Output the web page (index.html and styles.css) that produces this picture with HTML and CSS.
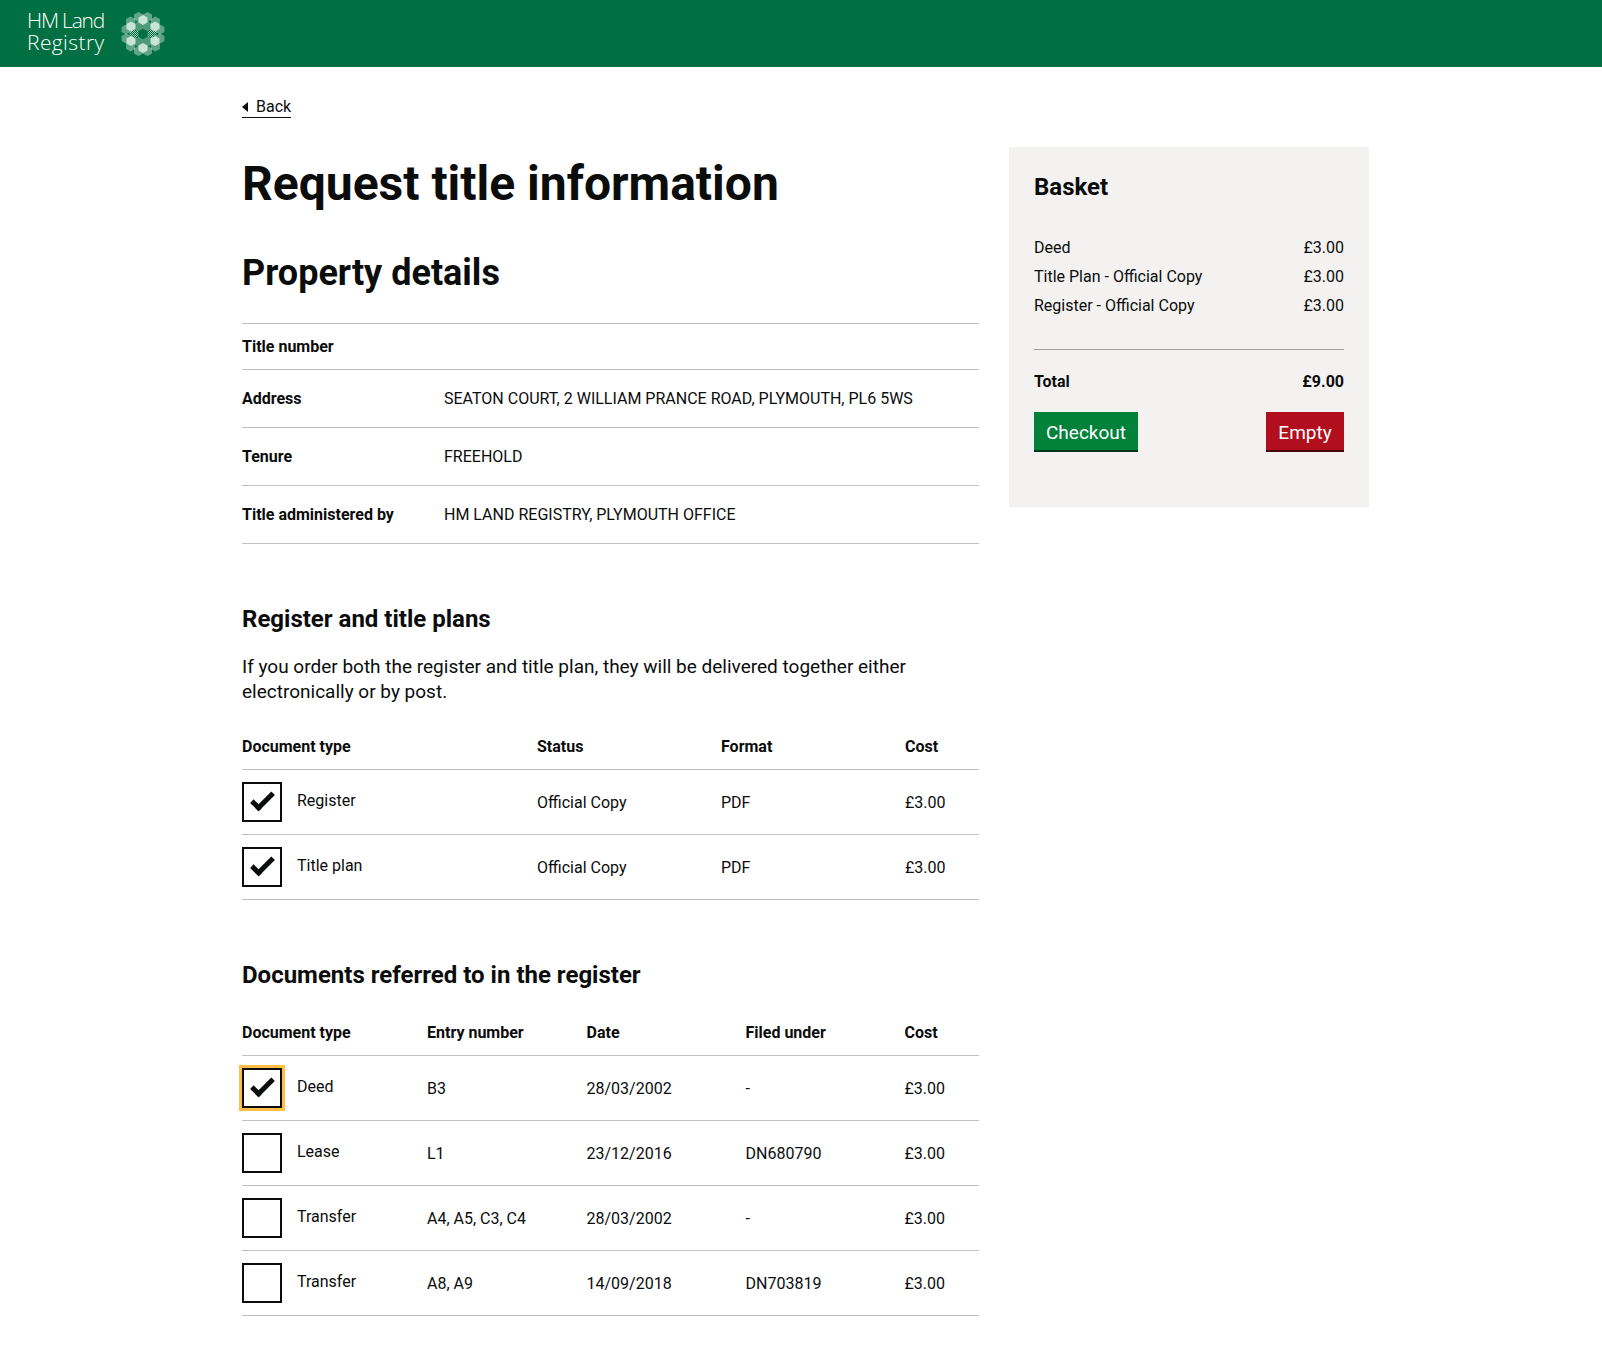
FILE: index.html
```html
<!DOCTYPE html>
<html lang="en">
<head>
    <meta charset="UTF-8">
    <title>Request title information - HM Land Registry</title>
    <link rel="stylesheet" href="styles.css">
</head>
<body>
    <header class="site-header">
        <a class="logo" href="#">
            <span class="logo-text">
                <span class="logo-line-one">HM Land</span>
                <span class="logo-line-two">Registry</span>
            </span>
            <svg class="logo-mark" width="44" height="44" viewBox="0 0 44 44">
                <defs>
                    <polygon id="hex" points="0,-5 4.500,-2.500 4.500,2.500 0,5 -4.500,2.500 -4.500,-2.500"/>
                    <pattern id="dither" width="2" height="2" patternUnits="userSpaceOnUse">
                        <rect width="1" height="1" fill="#fff" fill-opacity="0.75"/>
                        <rect x="1" y="1" width="1" height="1" fill="#fff" fill-opacity="0.75"/>
                    </pattern>
                    <pattern id="dither-dim" width="2" height="2" patternUnits="userSpaceOnUse">
                        <rect width="1" height="1" fill="#fff" fill-opacity="0.6"/>
                        <rect x="1" y="1" width="1" height="1" fill="#fff" fill-opacity="0.6"/>
                    </pattern>
                </defs>
                <g fill="url(#dither)">
                    <use href="#hex" x="38.900" y="26.500"/>
                    <use href="#hex" x="34.400" y="34.400"/>
                    <use href="#hex" x="26.500" y="38.900"/>
                    <use href="#hex" x="17.500" y="38.900"/>
                    <use href="#hex" x="9.600" y="34.400"/>
                    <use href="#hex" x="5.100" y="26.500"/>
                    <use href="#hex" x="5.100" y="17.500"/>
                    <use href="#hex" x="9.600" y="9.600"/>
                    <use href="#hex" x="17.500" y="5.100"/>
                    <use href="#hex" x="26.500" y="5.100"/>
                    <use href="#hex" x="34.400" y="9.600"/>
                    <use href="#hex" x="38.900" y="17.500"/>
                </g>
                <g fill="url(#dither-dim)">
                    <use href="#hex" x="31" y="22"/>
                    <use href="#hex" x="26.500" y="29.800"/>
                    <use href="#hex" x="17.500" y="29.800"/>
                    <use href="#hex" x="13" y="22"/>
                    <use href="#hex" x="17.500" y="14.200"/>
                    <use href="#hex" x="26.500" y="14.200"/>
                </g>
                <g fill="#c9e3d6">
                    <use href="#hex" x="22" y="8"/>
                    <use href="#hex" x="22" y="36"/>
                    <use href="#hex" x="10" y="14.500"/>
                    <use href="#hex" x="34" y="14.500"/>
                    <use href="#hex" x="10" y="29"/>
                    <use href="#hex" x="34" y="29"/>
                </g>
                <circle cx="22" cy="22" r="3.500" fill="#006f41"/>
            </svg>
        </a>
    </header>

    <div class="page">
        <main class="main-col">
            <a class="back-link" href="#">Back</a>

            <div class="columns">
                <div class="content">
                    <h1>Request title information</h1>
                    <h2>Property details</h2>

                    <dl class="summary">
                        <div class="summary-row title-row">
                            <dt>Title number</dt>
                            <dd></dd>
                        </div>
                        <div class="summary-row">
                            <dt>Address</dt>
                            <dd>SEATON COURT, 2 WILLIAM PRANCE ROAD, PLYMOUTH, PL6 5WS</dd>
                        </div>
                        <div class="summary-row">
                            <dt>Tenure</dt>
                            <dd>FREEHOLD</dd>
                        </div>
                        <div class="summary-row">
                            <dt>Title administered by</dt>
                            <dd>HM LAND REGISTRY, PLYMOUTH OFFICE</dd>
                        </div>
                    </dl>

                    <h3 class="first-section">Register and title plans</h3>
                    <p class="intro">If you order both the register and title plan, they will be delivered together either electronically or by post.</p>

                    <table class="doc-table plans">
                        <thead>
                            <tr>
                                <th class="col-type">Document type</th>
                                <th class="col-status">Status</th>
                                <th class="col-format">Format</th>
                                <th>Cost</th>
                            </tr>
                        </thead>
                        <tbody>
                            <tr>
                                <td><label class="check"><span class="box checked"></span><span class="check-text">Register</span></label></td>
                                <td>Official Copy</td>
                                <td>PDF</td>
                                <td>£3.00</td>
                            </tr>
                            <tr>
                                <td><label class="check"><span class="box checked"></span><span class="check-text">Title plan</span></label></td>
                                <td>Official Copy</td>
                                <td>PDF</td>
                                <td>£3.00</td>
                            </tr>
                        </tbody>
                    </table>

                    <h3 class="second-section">Documents referred to in the register</h3>

                    <table class="doc-table referred">
                        <thead>
                            <tr>
                                <th class="col-doc">Document type</th>
                                <th class="col-entry">Entry number</th>
                                <th class="col-date">Date</th>
                                <th class="col-filed">Filed under</th>
                                <th>Cost</th>
                            </tr>
                        </thead>
                        <tbody>
                            <tr>
                                <td><label class="check"><span class="box checked focused"></span><span class="check-text">Deed</span></label></td>
                                <td>B3</td>
                                <td>28/03/2002</td>
                                <td>-</td>
                                <td>£3.00</td>
                            </tr>
                            <tr>
                                <td><label class="check"><span class="box"></span><span class="check-text">Lease</span></label></td>
                                <td>L1</td>
                                <td>23/12/2016</td>
                                <td>DN680790</td>
                                <td>£3.00</td>
                            </tr>
                            <tr>
                                <td><label class="check"><span class="box"></span><span class="check-text">Transfer</span></label></td>
                                <td>A4, A5, C3, C4</td>
                                <td>28/03/2002</td>
                                <td>-</td>
                                <td>£3.00</td>
                            </tr>
                            <tr>
                                <td><label class="check"><span class="box"></span><span class="check-text">Transfer</span></label></td>
                                <td>A8, A9</td>
                                <td>14/09/2018</td>
                                <td>DN703819</td>
                                <td>£3.00</td>
                            </tr>
                        </tbody>
                    </table>
                </div>

                <aside class="basket">
                    <h2 class="basket-title">Basket</h2>
                    <ul class="basket-items">
                        <li><span>Deed</span><span>£3.00</span></li>
                        <li><span>Title Plan - Official Copy</span><span>£3.00</span></li>
                        <li><span>Register - Official Copy</span><span>£3.00</span></li>
                    </ul>
                    <div class="basket-total"><span>Total</span><span>£9.00</span></div>
                    <div class="basket-actions">
                        <a class="button button-green" href="#">Checkout</a>
                        <a class="button button-red" href="#">Empty</a>
                    </div>
                </aside>
            </div>
        </main>
    </div>
</body>
</html>
```

FILE: styles.css
```css
/* page */
body {
    margin: 0;
    font-family: "Roboto", "Liberation Sans", sans-serif;
    font-size: 16px;
    color: #0b0c0c;
    background-color: #fff;
}

/* header */
.site-header {
    background-color: #006f41;
    height: 67px;
    padding-left: 27px;
    box-sizing: border-box;
}

.logo {
    display: flex;
    align-items: center;
    height: 67px;
    color: #fff;
    text-decoration: none;
}

.logo-text {
    width: 78px;
    margin-bottom: 5px;
    font-family: "Open Sans", sans-serif;
    font-weight: 300;
    font-size: 21px;
    line-height: 22px;
}

.logo-line-one,
.logo-line-two {
    display: block;
    white-space: nowrap;
}

.logo-line-one {
    letter-spacing: -1.2px;
}

.logo-line-two {
    letter-spacing: 0.4px;
}

.logo-mark {
    margin-left: 16px;
}

/* layout */
.page {
    padding-left: 242px;
    width: 1127px;
}

.back-link {
    display: inline-block;
    margin-top: 30px;
    padding-left: 14px;
    height: 20px;
    line-height: 20px;
    color: #0b0c0c;
    font-size: 16px;
    text-decoration: none;
    border-bottom: 1px solid #0b0c0c;
    position: relative;
}

.back-link::before {
    content: "";
    position: absolute;
    left: 0;
    top: 5px;
    border-style: solid;
    border-width: 5px 6px 5px 0;
    border-color: transparent #0b0c0c transparent transparent;
}

.columns {
    display: flex;
    justify-content: space-between;
    align-items: flex-start;
    margin-top: 29px;
}

.content {
    width: 737px;
}

/* headings */
h1 {
    margin: 10px 0 0;
    font-size: 48px;
    line-height: 54px;
    font-weight: 700;
}

h2 {
    margin: 42px 0 0;
    font-size: 36px;
    line-height: 40px;
    font-weight: 700;
}

h3 {
    font-size: 24px;
    line-height: 30px;
    font-weight: 700;
    margin: 0;
}

.first-section {
    margin-top: 60px;
}

.second-section {
    margin-top: 60px;
}

.intro {
    margin: 20px 0 0;
    font-size: 19px;
    line-height: 25px;
}

/* property details */
.summary {
    margin: 30px 0 0;
    border-top: 1px solid #bfc1c3;
}

.summary-row {
    display: flex;
    height: 57px;
    align-items: center;
    border-bottom: 1px solid #bfc1c3;
    box-sizing: content-box;
}

.title-row {
    height: 45px;
}

.summary-row dt {
    width: 202px;
    font-weight: 700;
}

.summary-row dd {
    margin: 0;
}

/* tables */
.doc-table {
    width: 100%;
    border-collapse: collapse;
    table-layout: fixed;
    margin-top: 20px;
}

.doc-table th {
    text-align: left;
    font-weight: 700;
    height: 45px;
    padding: 0;
    border-bottom: 1px solid #bfc1c3;
}

.doc-table td {
    height: 64px;
    padding: 0;
    border-bottom: 1px solid #bfc1c3;
}

.col-type { width: 295px; }
.col-status { width: 184px; }
.col-format { width: 184px; }

.col-doc { width: 185px; }
.col-entry { width: 159.500px; }
.col-date { width: 159px; }
.col-filed { width: 159px; }

.check {
    display: flex;
    align-items: center;
    line-height: 20px;
}

.check-text {
    padding-bottom: 2px;
}

.box {
    display: block;
    width: 40px;
    height: 40px;
    box-sizing: border-box;
    border: 2px solid #0b0c0c;
    margin-right: 15px;
    position: relative;
    flex-shrink: 0;
}

.box.checked::after {
    content: "";
    position: absolute;
    left: 7px;
    top: 9px;
    width: 23px;
    height: 12px;
    border-left: 5px solid #0b0c0c;
    border-bottom: 5px solid #0b0c0c;
    transform: rotate(-45deg);
    box-sizing: border-box;
}

.box.focused {
    outline: 3px solid #ffbf47;
}

/* basket */
.basket {
    width: 360px;
    height: 360px;
    box-sizing: border-box;
    background-color: #f3f2f1;
    padding: 25px 25px;
}

.basket-title {
    margin: 0;
    font-size: 24px;
    line-height: 30px;
}

.basket-items {
    list-style: none;
    margin: 31px 0 0;
    padding: 0;
}

.basket-items li {
    display: flex;
    justify-content: space-between;
    line-height: 29px;
}

.basket-total {
    display: flex;
    justify-content: space-between;
    font-weight: 700;
    margin-top: 29px;
    padding-top: 22px;
    border-top: 1px solid #a1a1a1;
    line-height: 20px;
}

.basket-actions {
    display: flex;
    justify-content: space-between;
    margin-top: 20px;
}

.button {
    display: block;
    height: 40px;
    box-sizing: border-box;
    padding: 2px 12px 0;
    line-height: 38px;
    font-size: 19px;
    color: #fff;
    text-decoration: none;
}

.button-green {
    background-color: #00823b;
    border-bottom: 2px solid #003618;
}

.button-red {
    width: 78px;
    text-align: center;
    padding-left: 0;
    padding-right: 0;
    background-color: #b10e1e;
    border-bottom: 2px solid #47060c;
}
```
